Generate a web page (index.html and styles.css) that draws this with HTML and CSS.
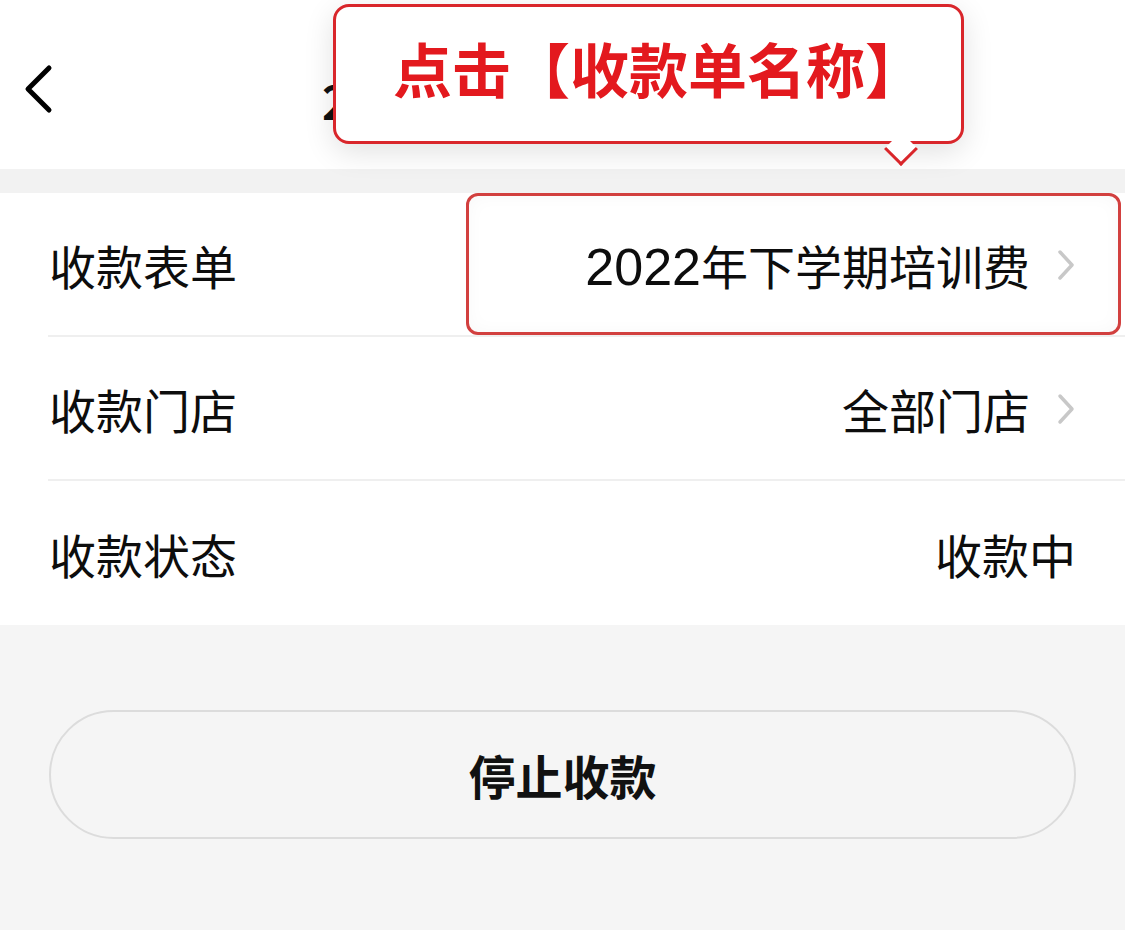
FILE: index.html
```html
<!DOCTYPE html>
<html lang="zh-CN">
<head>
<meta charset="utf-8">
<link rel="stylesheet" href="styles.css">
</head>
<body>
<div class="page">
  <header class="nav">
    <svg class="back" width="34" height="50" viewBox="0 0 34 50"><path d="M27 4 L6 25 L27 46" fill="none" stroke="#000" stroke-width="5" stroke-linecap="round" stroke-linejoin="round"/></svg>
    <div class="title">2022年下学期培训费</div>
  </header>
  <div class="band"></div>
  <section class="list">
    <div class="row">
      <div class="label">收款表单</div>
      <div class="value"><span><span class="num">2022</span>年下学期培训费</span><svg class="chev" width="20" height="32" viewBox="0 0 20 32"><path d="M4 3 L16 16 L4 29" fill="none" stroke="#c8c8c8" stroke-width="3.5" stroke-linecap="round" stroke-linejoin="round"/></svg></div>
      <div class="highlight"></div>
    </div>
    <div class="row">
      <div class="label">收款门店</div>
      <div class="value">全部门店<svg class="chev" width="20" height="32" viewBox="0 0 20 32"><path d="M4 3 L16 16 L4 29" fill="none" stroke="#c8c8c8" stroke-width="3.5" stroke-linecap="round" stroke-linejoin="round"/></svg></div>
    </div>
    <div class="row last">
      <div class="label">收款状态</div>
      <div class="value">收款中</div>
    </div>
  </section>
  <div class="actions">
    <button class="stop">停止收款</button>
  </div>
  <div class="callout">点击【收款单名称】<span class="tail"></span></div>
</div>
</body>
</html>
```

FILE: styles.css
```css
* { box-sizing: border-box; }
html, body { margin: 0; padding: 0; }
body {
  width: 1125px;
  height: 930px;
  overflow: hidden;
  background: #f5f5f5;
  font-family: "Noto Sans CJK SC", "Noto Sans", sans-serif;
  color: #111;
}
.page { position: relative; width: 1125px; height: 930px; }
.nav {
  height: 169px;
  background: #fff;
  display: flex;
  align-items: center;
  position: relative;
  padding-left: 22px;
}
.back { margin-top: 8px; }
.title {
  position: absolute;
  left: 322px;
  top: 70px;
  font-size: 46px;
  font-weight: 700;
  line-height: 60px;
  white-space: nowrap;
}
.band {
  height: 24px;
  background: #f2f2f2;
}
.list {
  background: #fff;
  padding-left: 48px;
}
.row {
  position: relative;
  height: 144px;
  display: flex;
  align-items: center;
  justify-content: space-between;
  padding-right: 49px;
  border-bottom: 2px solid #efefef;
  font-size: 47px;
  color: #0d0d0d;
}
.row.last { border-bottom: none; }
.label { padding-left: 1px; }
.value {
  display: flex;
  align-items: center;
  gap: 26px;
}
.num {
  font-family: "Liberation Sans", "Noto Sans CJK SC", sans-serif;
  font-size: 52px;
}
.chev { margin-top: 2px; }
.highlight {
  position: absolute;
  left: 418px;
  right: 4px;
  top: 0;
  bottom: 0;
  border: 3px solid #d2403f;
  border-radius: 12px;
  box-shadow: inset 0 0 18px rgba(0,0,0,0.03);
}
.actions {
  padding: 85px 49px 0 49px;
}
.stop {
  width: 1027px;
  height: 129px;
  border: 2px solid #dcdcdc;
  border-radius: 65px;
  background: #f5f5f5;
  font-family: "Noto Sans CJK SC", sans-serif;
  font-size: 47px;
  font-weight: 700;
  color: #111;
  display: flex;
  align-items: center;
  justify-content: center;
  padding: 0;
}
.callout {
  position: absolute;
  left: 333px;
  top: 4px;
  width: 631px;
  height: 140px;
  background: #fff;
  border: 3px solid #d9262b;
  border-radius: 16px;
  box-shadow: 0 8px 30px rgba(0,0,0,0.12);
  color: #e3191e;
  font-size: 59px;
  font-weight: 700;
  display: flex;
  align-items: center;
  justify-content: center;
  padding-bottom: 14px;
  padding-left: 20px;
}
.tail {
  position: absolute;
  left: 553px;
  bottom: -20px;
  width: 24px;
  height: 24px;
  background: #fff;
  border-right: 3px solid #d9262b;
  border-bottom: 3px solid #d9262b;
  transform: rotate(45deg);
}
```
